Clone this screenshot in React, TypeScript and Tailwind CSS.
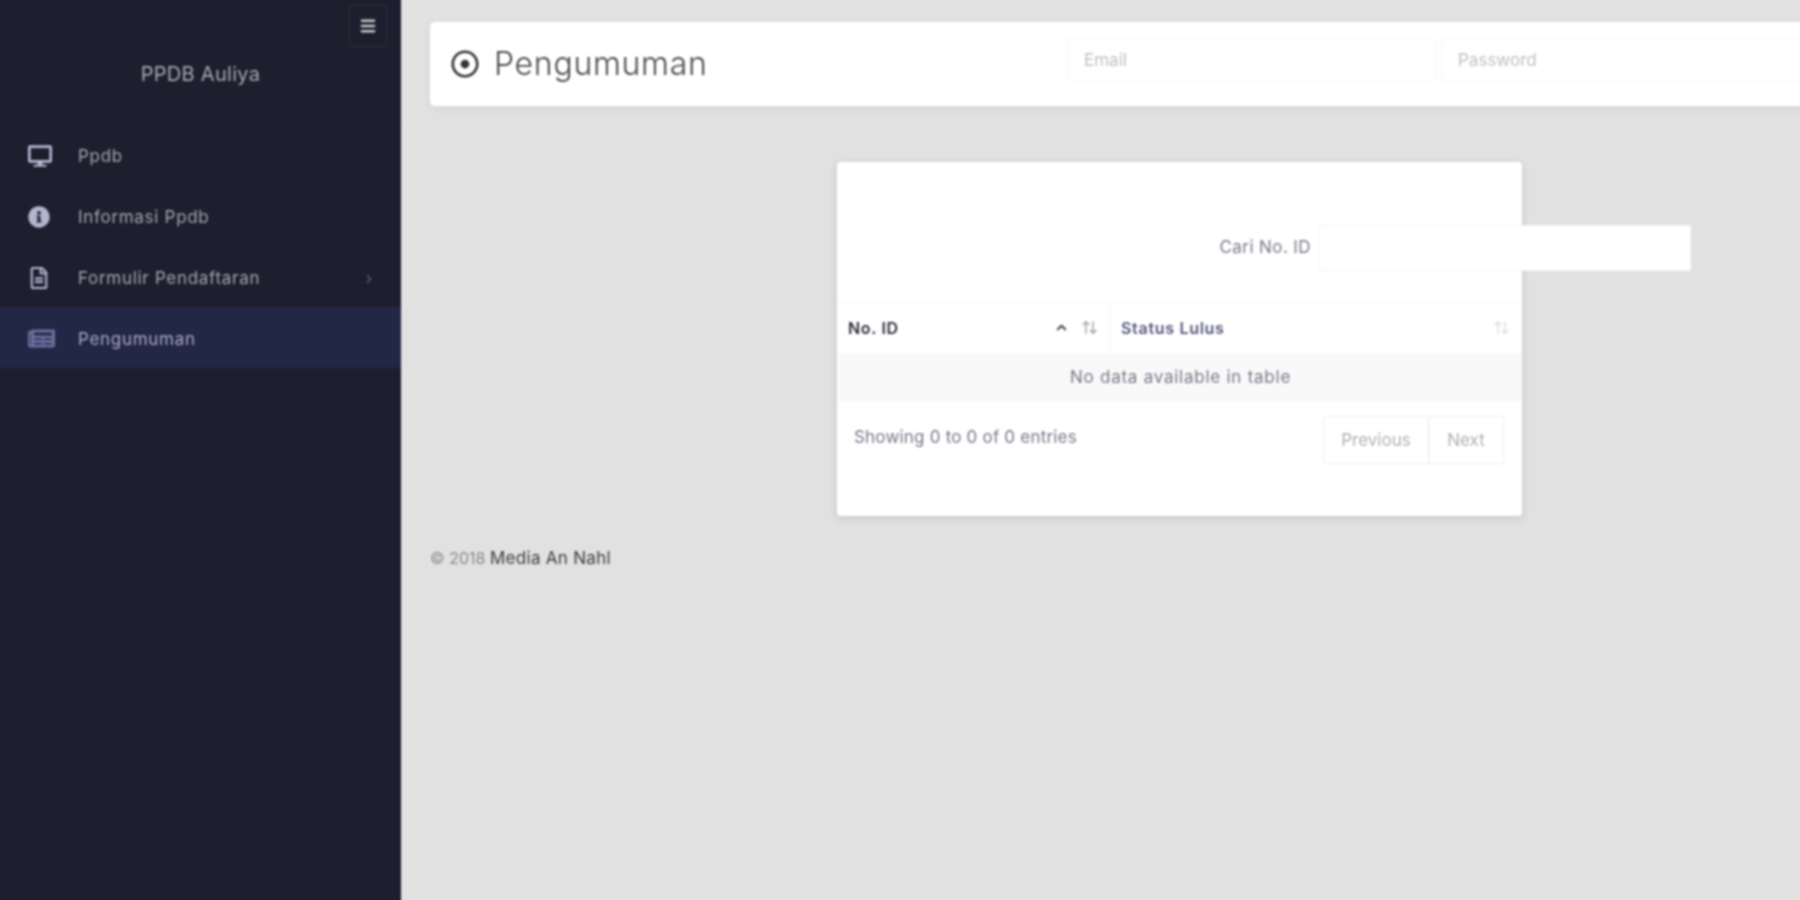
import { ChevronRight, ChevronUp, ArrowUpDown, Menu } from "lucide-react";
import { FaDesktop, FaInfoCircle, FaNewspaper, FaRegDotCircle, FaRegFileAlt } from "react-icons/fa";

const menu = [
  { label: "Ppdb", icon: FaDesktop, size: 24 },
  { label: "Informasi Ppdb", icon: FaInfoCircle, size: 22 },
  { label: "Formulir Pendaftaran", icon: FaRegFileAlt, size: 22, arrow: true },
  { label: "Pengumuman", icon: FaNewspaper, size: 27, active: true },
];

function Sidebar() {
  return (
    <aside className="w-[405px] shrink-0 bg-[#1e1e2e]">
      <div className="flex justify-end pt-[9px] pr-[14px]">
        <button className="flex h-[42px] w-[38px] items-center justify-center rounded-[3px] border border-[#2f2f3c] text-[#c8c8cc]">
          <Menu size={18} strokeWidth={3.5} />
        </button>
      </div>
      <div className="mt-[12px] pl-[4px] text-center text-[20px] tracking-[0.3px] text-[#a9a9b2]">PPDB Auliya</div>
      <nav className="mt-[34px] border-t border-[#222233]">
        {menu.map((item) => (
          <div
            key={item.label}
            className={
              item.active
                ? "flex h-[61px] items-center bg-[#222745] pl-[32px] pr-[25px] text-[#a9a9c4]"
                : "flex h-[61px] items-center pl-[32px] pr-[25px] text-[#a5a5b0]"
            }
          >
            <span className="flex w-[50px] shrink-0 translate-y-px items-center">
              <item.icon size={item.size} className={item.active ? "text-[#6d6f9e]" : "text-[#b4b6d0]"} />
            </span>
            <span className="translate-y-[2px] text-[17px] tracking-[0.7px]">{item.label}</span>
            {item.arrow && <ChevronRight size={14} className="ml-auto translate-y-[2px] text-[#666672]" />}
          </div>
        ))}
      </nav>
    </aside>
  );
}

function Topbar() {
  return (
    <header className="flex h-[84px] w-[1500px] items-center rounded-[5px] bg-white pl-[21px] shadow-[0_3px_10px_rgba(0,0,0,0.05)]">
      <FaRegDotCircle size={28} className="shrink-0 text-[#333338]" />
      <h1 className="ml-[15px] w-[573px] shrink-0 text-[32px] font-light tracking-[0.7px] text-[#4a4a4e]">Pengumuman</h1>
      <div className="flex -translate-y-[4px] gap-[4px]">
        <input placeholder="Email" className="h-[44px] w-[370px] rounded-[4px] border border-[#f7f7f7] bg-white px-[16px] text-[17px] outline-none placeholder:text-[#c0c0c0]" />
        <input placeholder="Password" className="h-[44px] w-[370px] rounded-[4px] border border-[#f7f7f7] bg-white px-[16px] text-[17px] outline-none placeholder:text-[#c0c0c0]" />
      </div>
    </header>
  );
}

function ResultCard() {
  return (
    <section className="ml-[407px] mt-[56px] h-[354px] w-[685px] rounded-[4px] bg-white shadow-[0_2px_10px_rgba(0,0,0,0.12)]">
      <div className="mr-[-169px] flex items-center justify-end gap-[8px] pt-[63px]">
        <label className="text-[17px] tracking-[0.4px] text-[#77778a]">Cari No. ID</label>
        <input className="h-[46px] w-[372px] rounded-[2px] border border-[#f6f6f6] bg-white outline-none" />
      </div>
      <div className="mt-[32px] ml-[2px]">
        <div className="flex h-[51px] border-y border-[#f8f8f8] pb-[2px] text-[16px] font-semibold tracking-[0.7px]">
          <div className="flex w-[272px] items-center border-r border-[#f4f4f4] pl-[9px] pr-[12px] text-[#2c2c3a]">
            No. ID
            <ChevronUp size={15} strokeWidth={3} className="ml-auto text-[#333340]" />
            <ArrowUpDown size={17} className="ml-[12px] text-[#a0a0ac]" />
          </div>
          <div className="flex flex-1 items-center pl-[10px] pr-[12px] text-[#55557c]">
            Status Lulus
            <ArrowUpDown size={17} className="ml-auto text-[#dedede]" />
          </div>
        </div>
        <div className="flex h-[47px] items-center justify-center border-b border-[#f4f4f4] bg-[#f9f9f9] pt-px text-[17px] tracking-[0.75px] text-[#77778a]">
          No data available in table
        </div>
      </div>
      <div className="flex items-start justify-between pl-[17px] pr-[18px] pt-[15px]">
        <div className="pt-[9px] text-[17px] tracking-[0.2px] text-[#77778a]">Showing 0 to 0 of 0 entries</div>
        <div className="flex h-[48px] rounded-[3px] border border-[#eeeeee] pt-px text-[17px] text-[#b0b0b6]">
          <span className="flex w-[105px] items-center justify-center border-r border-[#e8e8e8]">Previous</span>
          <span className="flex w-[74px] items-center justify-center">Next</span>
        </div>
      </div>
    </section>
  );
}

export default function App() {
  return (
    <div className="h-[900px] w-[1800px] overflow-hidden bg-[#e1e1e1]">
      {/* the blurred layer runs 4px past the window so its edges don't fade in view */}
      <div className="-m-[4px] flex h-[908px] w-[1808px] font-['Inter',sans-serif] blur-[1px]">
        <Sidebar />
        <main className="min-w-0 flex-1 pl-[29px] pt-[26px]">
          <Topbar />
          <ResultCard />
          <footer className="mt-[30px] text-[16px] text-[#8a8a94]">
            © 2018 <span className="text-[17px] tracking-[0.3px] text-[#3a3a44]">Media An Nahl</span>
          </footer>
        </main>
      </div>
    </div>
  );
}
